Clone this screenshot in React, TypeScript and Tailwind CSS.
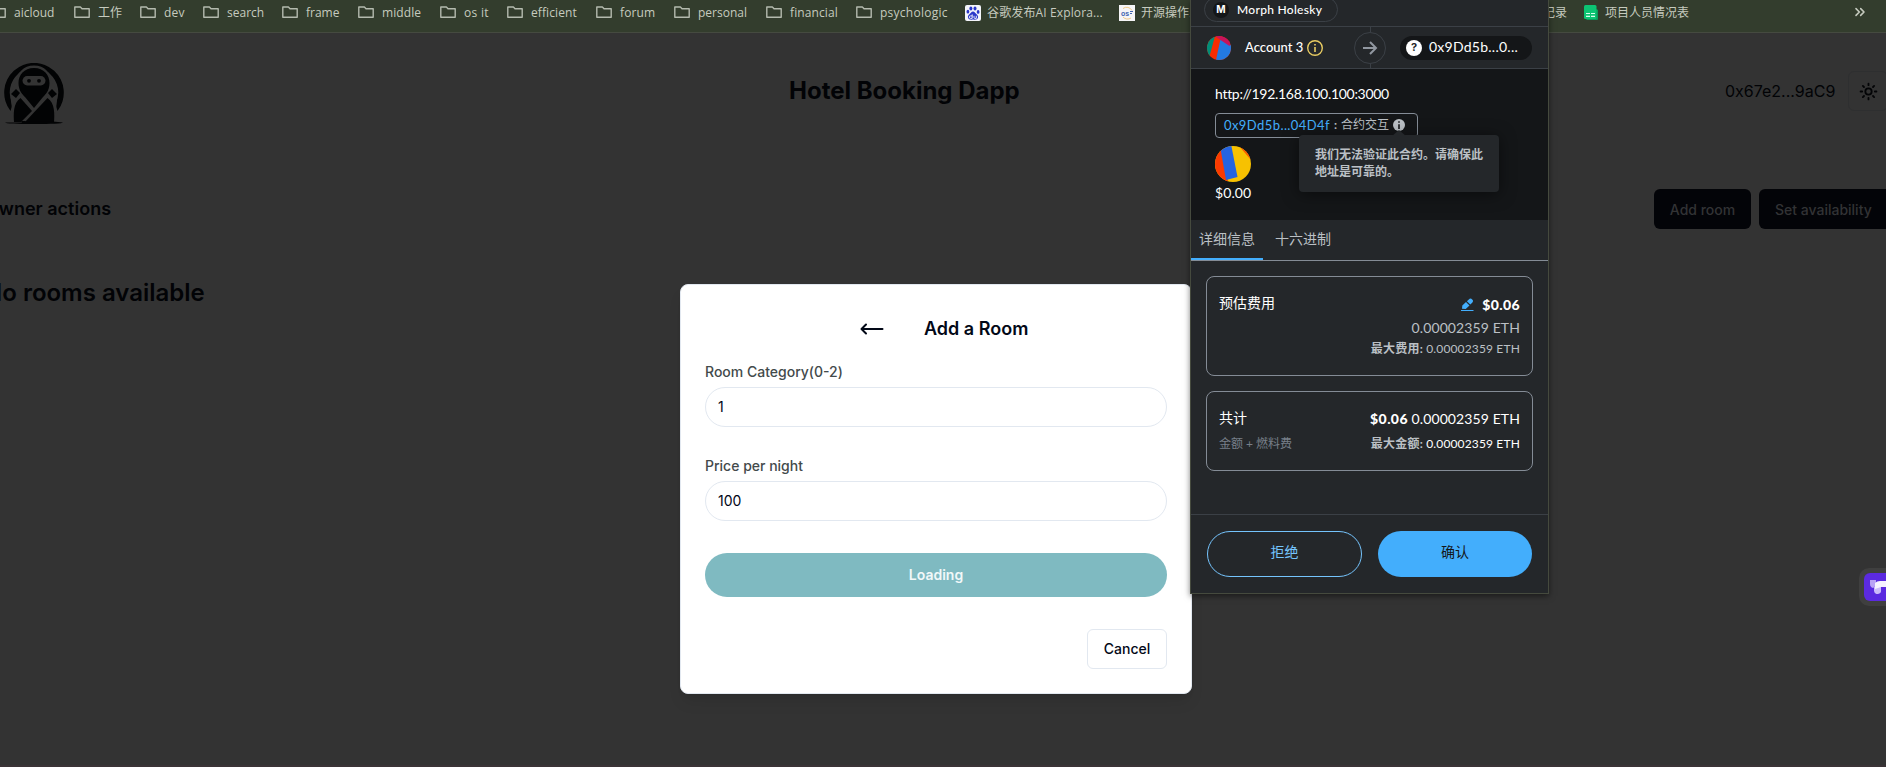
import type { ReactNode } from "react";
import { ChevronsRight } from "lucide-react";

function FolderIcon() {
  return (
    <svg width="16" height="14" viewBox="0 0 16 14" className="shrink-0" fill="none" stroke="#b4baae" strokeWidth="1.4">
      <path d="M.8 1.500v9.800h14.400V2.700H8L6.400 1H.8z" strokeLinejoin="round" />
    </svg>
  );
}

const folders = [
  { name: "aicloud", box: "w-[84px]", text: "" },
  { name: "工作", box: "w-[66px]", text: "" },
  { name: "dev", box: "w-[63px]", text: "tracking-[0.2px]" },
  { name: "search", box: "w-[79px]", text: "" },
  { name: "frame", box: "w-[76px]", text: "" },
  { name: "middle", box: "w-[82px]", text: "tracking-[0.1px]" },
  { name: "os it", box: "w-[67px]", text: "tracking-[0.3px]" },
  { name: "efficient", box: "w-[89px]", text: "tracking-[0.1px]" },
  { name: "forum", box: "w-[78px]", text: "tracking-[0.1px]" },
  { name: "personal", box: "w-[92px]", text: "" },
  { name: "financial", box: "w-[90px]", text: "tracking-[0.1px]" },
  { name: "psychologic", box: "w-[109px]", text: "tracking-[0.25px]" },
];

function BaiduIcon() {
  return (
    <svg width="16" height="16" viewBox="0 0 16 16" className="shrink-0">
      <rect width="16" height="16" rx="2" fill="#f4f5fb" />
      <g fill="#2a37c9">
        <ellipse cx="5.900" cy="3.500" rx="1.500" ry="2.100" />
        <ellipse cx="10" cy="3.500" rx="1.500" ry="2.100" />
        <ellipse cx="2.900" cy="6.700" rx="1.400" ry="1.900" />
        <ellipse cx="13.100" cy="6.900" rx="1.400" ry="1.900" />
        <path d="M8 6.600c1.600 0 2.300 1.500 3.300 2.500 1.300 1.200 2.100 2 1.700 3.700-.4 1.600-2 2-5 1.800-3 .2-4.600-.2-5-1.800-.4-1.700.4-2.500 1.700-3.700C5.700 8.100 6.400 6.600 8 6.600z" />
      </g>
      <path d="M7.200 9.400v4H5.600a1.200 1.200 0 010-2.500h1.600M9 10.800v1.700c0 .7.400.9 1 .9h1.300v-2.600" fill="none" stroke="#fff" strokeWidth=".9" />
    </svg>
  );
}

function SheetIcon() {
  return (
    <svg width="14" height="15" viewBox="0 0 14 15" className="shrink-0">
      <path d="M12.500 4l1.500 1v9a1 1 0 01-1 1H2z" fill="#0a9c5c" />
      <rect width="12.500" height="14" rx="1.500" fill="#0cc473" />
      <path d="M2 8.500h4M7 8.500h4M2 11.300h4M7 11.300h4" stroke="#d9ffed" strokeWidth="1.200" />
    </svg>
  );
}

function BookmarksBar() {
  return (
    <div className="flex h-[33px] items-start overflow-hidden whitespace-nowrap border-b border-[#454a40] bg-[#333d2d] pt-[3px] font-['Open_Sans','Noto_Sans_CJK_SC',sans-serif] text-[12px] leading-[20px] text-[#c6cbbf]">
      <div className="-ml-[10px] flex shrink-0">
        {folders.map((f) => (
          <div key={f.name} className={`flex shrink-0 items-center gap-2 ${f.box}`}>
            <FolderIcon />
            <span className={f.text}>{f.name}</span>
          </div>
        ))}
        <div className="-mt-px flex w-[154px] shrink-0 items-center gap-[6px]">
          <BaiduIcon />
          <span className="tracking-[0.130px]">谷歌发布AI Explora...</span>
        </div>
        <div className="-mt-px flex w-[424px] shrink-0 items-center gap-[6px]">
          <svg width="16" height="16" viewBox="0 0 16 16" className="shrink-0">
            <rect width="16" height="16" fill="#f5f5f7" />
            <path d="M4 3.500a6 6 0 019 2M12 13a6 6 0 01-8-1" fill="none" stroke="#f0c987" />
            <text x="2" y="10.500" fontSize="7" fontWeight="700" fill="#4263b0" fontFamily="Liberation Sans">
              os
            </text>
            <path d="M11 6.500h3M11 8.500h2" stroke="#4263b0" />
          </svg>
          <span>开源操作系统</span>
        </div>
        <div className="flex w-[41px] shrink-0 items-center">
          <span>记录</span>
        </div>
        <div className="-mt-px flex shrink-0 items-center gap-[7px]">
          <SheetIcon />
          <span>项目人员情况表</span>
        </div>
      </div>
      <ChevronsRight className="ml-auto mr-[18px] mt-[1px] shrink-0" size={16} strokeWidth={2.400} color="#c6cbbf" />
    </div>
  );
}

function NinjaLogo() {
  return (
    <svg width="60" height="62" viewBox="0 0 60 62">
      <path d="M6.500 48A29.800 29.800 0 1153.500 48L51.500 41A25 25 0 0046 11C40 3 20 3 14 11A25 25 0 008.500 41z" fill="#020304" />
      <path d="M30 2.500C19 2.500 13.500 10 13.500 18c-8 9-7 18-6 24l3 18h39l3-18c1-6 2-15-6-24C46.500 10 41 2.500 30 2.500z" fill="#333" />
      <path d="M30 5c-10 0-15.500 7-15.500 15 0 8 4.500 12 6.500 14l9 11 9-11c2-2 6.500-6 6.500-14C45.500 12 40 5 30 5z" fill="#020304" />
      <rect x="18.500" y="13" width="23" height="9.500" rx="4.700" fill="#333" />
      <circle cx="25" cy="17.800" r="1.900" fill="#020304" />
      <circle cx="35" cy="17.800" r="1.900" fill="#020304" />
      <path d="M12 26l4 4-4 5-5-4zM48 26l-4 4 4 5 5-4z" fill="#020304" />
      <path d="M16.500 35L28 48 17 59H10c-.500-8-1-19 6.500-24zM43.500 35L21 59h29c.500-8 1-19-6.500-24z" fill="#020304" />
      <path d="M1 59.500h17l-1-1.500h5l-1 .500h28l10 1c0 1-12 1.500-29 1.500S1 60.500 1 59.500z" fill="#020304" />
    </svg>
  );
}

function SunIcon() {
  return (
    <svg width="19" height="19" viewBox="0 0 24 24" fill="none" stroke="#030406" strokeWidth="2.300" strokeLinecap="round">
      <circle cx="12" cy="12" r="4" />
      <path d="M12 2v2M12 20v2M4.900 4.900l1.400 1.400M17.700 17.700l1.400 1.400M2 12h2M20 12h2M6.300 17.700l-1.400 1.400M19.100 4.900l-1.400 1.400" />
    </svg>
  );
}

function HotelPage() {
  return (
    <div className="h-[734px] overflow-hidden border-b-2 border-[#3a3336] bg-[#333333] font-['Inter',sans-serif] text-[#020306]">
      <header className="flex h-[122px] pl-[4px]">
        <div className="w-[785px] shrink-0 pt-[30px]">
          <NinjaLogo />
        </div>
        <h1 className="w-[936px] shrink-0 pt-[42px] text-[24px] font-bold leading-[32px]">Hotel Booking Dapp</h1>
        <span className="w-[123px] shrink-0 pt-[46px] text-[16px] leading-[24px]">0x67e2...9aC9</span>
        <div className="mt-[38px] flex h-10 w-10 shrink-0 items-center justify-center rounded-md border border-[#2e2f30]">
          <SunIcon />
        </div>
      </header>
      <div className="mt-[34px] flex h-10 items-center">
        <h2 className="-ml-[15px] text-[18px] font-semibold leading-[28px]">Owner actions</h2>
        <div className="ml-auto -mr-[5px] flex gap-2 text-[14px] font-medium text-[#323335]">
          <div className="flex h-10 w-[97px] items-center justify-center rounded-md bg-[#030408]">Add room</div>
          <div className="flex h-10 w-[132px] items-center rounded-md bg-[#030408] pl-4">Set availability</div>
        </div>
      </div>
      <h2 className="-ml-[16px] mt-[48px] text-[24px] font-semibold leading-[32px]">No rooms available</h2>
    </div>
  );
}

function Field({ label, value }: { label: string; value: string }) {
  return (
    <div>
      <div className="text-[14px] font-medium leading-[20px] text-[#434a4b]">{label}</div>
      <div className="mt-[5px] flex h-10 items-center rounded-full border border-slate-200 px-3 pb-px text-[14px] text-slate-950">{value}</div>
    </div>
  );
}

function AddRoomDialog() {
  return (
    <div className="absolute left-[680px] top-[284px] flex h-[410px] w-[512px] flex-col rounded-lg border border-slate-200 bg-white px-6 font-['Inter',sans-serif] shadow-lg">
      <div className="mt-[30px] flex h-[28px] items-center">
        <svg width="24" height="14" viewBox="0 0 24 14" className="ml-[155px]" fill="none" stroke="#020817" strokeWidth="2" strokeLinecap="round" strokeLinejoin="round">
          <path d="M6 2.500L1.500 7 6 11.500M2 7h20.500" />
        </svg>
        <h3 className="ml-[40px] text-[18px] font-semibold leading-[28px] text-[#020817]">Add a Room</h3>
      </div>
      <div className="mt-[19px] flex flex-col gap-[29px]">
        <Field label="Room Category(0-2)" value="1" />
        <Field label="Price per night" value="100" />
      </div>
      <div className="mt-[32px] flex h-11 items-center justify-center rounded-full bg-[#7fbac1] pb-[2px] text-[14px] font-semibold text-[#f1f8f9]">Loading</div>
      <div className="mt-[32px] flex h-10 w-[80px] items-center justify-center self-end rounded-md border border-slate-200 pb-[2px] text-[14px] font-medium text-[#020817]">Cancel</div>
    </div>
  );
}

function AccountAvatar() {
  return (
    <svg width="24" height="24" viewBox="0 0 24 24">
      <clipPath id="account">
        <circle cx="12" cy="12" r="12" />
      </clipPath>
      <g clipPath="url(#account)">
        <rect width="24" height="24" fill="#f92c01" />
        <path d="M0 0h8L2 22H0z" fill="#018e78" />
        <path d="M13.500 3L24 9v15H9z" fill="#2379e1" />
        <path d="M13 0h11v7l-1.500 3L13.500 4 8 0z" fill="#c8145c" />
      </g>
    </svg>
  );
}

function ContractAvatar() {
  return (
    <svg width="36" height="36" viewBox="0 0 36 36">
      <clipPath id="contract">
        <circle cx="18" cy="18" r="18" />
      </clipPath>
      <g clipPath="url(#contract)">
        <rect width="36" height="36" fill="#f7c101" />
        <path d="M0 0h7l6 36H0z" fill="#fb3a01" />
        <path d="M5 0l11-2 6.500 33L11 34z" fill="#2464e1" />
        <path d="M24 0l12 14V0z" fill="#fb5a01" />
      </g>
    </svg>
  );
}

function Row({ className, children }: { className: string; children: ReactNode }) {
  return <div className={`flex items-center justify-between whitespace-pre ${className}`}>{children}</div>;
}

function WalletPopup() {
  return (
    <div className="absolute left-[1190px] top-0 flex h-[594px] w-[359px] flex-col border border-t-0 border-[#454a3e] bg-[#24272a] font-['Lato','Noto_Sans_CJK_SC',sans-serif] text-white shadow-[0_2px_6px_rgba(0,0,0,0.5)]">
      <div className="flex h-[27px] shrink-0 border-b border-[#3b4046] pl-[13px]">
        <div className="-mt-[3px] flex h-[25px] w-[134px] items-center gap-2 rounded-full border border-[#3b4046] pl-[8px]">
          <div className="flex h-4 w-4 items-center justify-center rounded-full bg-[#141618] font-['Inter',sans-serif] text-[10px] font-bold">M</div>
          <span className="whitespace-nowrap text-[12px] font-medium tracking-[0.300px]">Morph Holesky</span>
        </div>
      </div>
      <div className="flex h-[42px] shrink-0 items-center border-b border-[#3b4046] pl-[16px]">
        <AccountAvatar />
        <span className="-mt-[2px] ml-[14px] w-[61px] whitespace-nowrap text-[13px] font-medium leading-[16px]">Account 3</span>
        <svg width="18" height="18" viewBox="0 0 18 18" className="mt-px" fill="none" stroke="#e9cc62">
          <circle cx="9" cy="9" r="7.300" strokeWidth="1.400" />
          <path d="M9 8v5M9 5v1.600" strokeWidth="1.600" />
        </svg>
        <div className="ml-[30px] flex h-[41px] w-8 flex-col items-center">
          <div className="h-[5px] w-px bg-[#3b4046]" />
          <div className="flex h-8 w-8 items-center justify-center rounded-full border border-[#3b4046]">
            <svg width="16" height="16" viewBox="0 0 16 16" fill="none" stroke="#9197a0" strokeWidth="2">
              <path d="M1 8h12.500M8 2l6 6-6 6" />
            </svg>
          </div>
          <div className="h-1 w-px bg-[#3b4046]" />
        </div>
        <div className="ml-[14px] flex h-6 w-[132px] items-center rounded-full bg-[#141618] pl-[6px]">
          <div className="flex h-4 w-4 items-center justify-center rounded-full bg-white font-['Inter',sans-serif] text-[11px] font-bold text-[#24272a]">?</div>
          <span className="ml-[7px] whitespace-nowrap pb-px text-[14px] leading-[18px] tracking-[0.250px]">0x9Dd5b...0...</span>
        </div>
      </div>
      <div className="h-[151px] shrink-0 bg-[#141618] pl-[24px] pt-[15px]">
        <div className="text-[14px] leading-[20px] tracking-[-0.300px]">http://192.168.100.100:3000</div>
        <div className="mt-[9px] flex h-[25px] w-[203px] items-center whitespace-pre rounded border border-[#848c96] pb-[2px] pl-[8px] text-[12px] leading-[16px] text-[#bbc0c5]">
          <span className="w-[110px] text-[13px] tracking-[0.420px] text-[#43aefc]">0x9Dd5b...04D4f</span>
          <span className="w-[7px] font-bold">:</span>
          <span>合约交互</span>
          <svg width="12" height="12" viewBox="0 0 12 12" className="ml-[4px]">
            <circle cx="6" cy="6" r="6" fill="#bbc0c5" />
            <path d="M6 5.200V10M6 2.200v1.600" stroke="#141618" strokeWidth="1.600" />
          </svg>
        </div>
        <div className="mt-[8px]">
          <ContractAvatar />
        </div>
        <div className="mt-[1px] text-[14px] leading-[20px] tracking-[0.100px]">$0.00</div>
      </div>
      <div className="flex h-[41px] shrink-0 border-b border-[#848c96] text-[14px] leading-[20px] text-[#bbc0c5]">
        <div className="h-[40px] w-[72px] border-b-2 border-[#43aefc] pl-[8px] pt-[9px]">详细信息</div>
        <div className="pl-[12px] pt-[9px]">十六进制</div>
      </div>
      <div className="mx-[15px] mt-[15px] h-[100px] w-[327px] shrink-0 rounded-lg border border-[#848c96] px-[12px] pt-[15px]">
        <Row className="h-[22px] text-[14px] leading-[20px]">
          <span>预估费用</span>
          <span className="flex items-center pt-[4px]">
            <svg width="13" height="14" viewBox="0 0 13 14" className="mr-[8px]" fill="#43aefc">
              <path d="M1 10.800l.3-3.300L5 4l3.500 3.500-3.800 3.400zM5.900 3.200l1.900-1.800a2.400 2.400 0 013.400 3.400L9.300 6.600z" />
              <rect y="12" width="12.500" height="1" />
            </svg>
            <b className="font-black tracking-[0.400px]">$0.06</b>
          </span>
        </Row>
        <div className="mt-[4px] text-right text-[14px] leading-[20px] tracking-[0.100px] text-[#bbc0c5]">0.00002359 ETH</div>
        <div className="mt-[2px] text-right text-[12px] leading-[18px] tracking-[0.150px] text-[#bbc0c5]">
          <b className="font-bold tracking-[0.200px]">最大费用:</b> 0.00002359 ETH
        </div>
      </div>
      <div className="mx-[15px] mt-[15px] h-[80px] w-[327px] shrink-0 rounded-lg border border-[#848c96] px-[12px] pt-[16px]">
        <Row className="h-[22px] text-[14px] leading-[20px]">
          <span className="-mt-[2px]">共计</span>
          <span className="tracking-[0.100px]">
            <b className="font-black tracking-[0.400px]">$0.06</b> 0.00002359 ETH
          </span>
        </Row>
        <Row className="mt-[4px] h-[20px] text-[12px] leading-[18px]">
          <span className="text-[#777f89]">金额 + 燃料费</span>
          <span className="tracking-[0.150px]">
            <b className="font-bold tracking-[0.200px] text-[#bbc0c5]">最大金额:</b> 0.00002359 ETH
          </span>
        </Row>
      </div>
      <div className="mt-auto flex h-[79px] shrink-0 gap-4 border-t border-[#3b4046] px-4 pt-4 text-[14px] leading-[20px]">
        <div className="flex h-[46px] w-[155px] items-center justify-center rounded-full border border-[#75c4fd] pb-[5px] text-[#75c4fd]">拒绝</div>
        <div className="flex h-[46px] w-[154px] items-center justify-center rounded-full bg-[#43aefc] pb-[5px] text-[#141618]">确认</div>
      </div>
      <div className="absolute left-[108px] top-[135px] h-[57px] w-[200px] rounded bg-[#24272a] pl-[16px] pt-[11px] text-[12px] font-bold leading-[17px] text-[#bbc0c5] shadow-[0_2px_16px_rgba(0,0,0,0.5)]">
        <svg width="14" height="6" viewBox="0 0 14 6" className="absolute -top-[5px] left-[93px]">
          <path d="M0 6l7-6 7 6z" fill="#24272a" />
        </svg>
        我们无法验证此合约。请确保此
        <br />
        地址是可靠的。
      </div>
    </div>
  );
}

function SideWidget() {
  return (
    <div className="absolute right-0 top-[568px] h-[38px] w-[27px] rounded-l-[10px] bg-[#3f3f3f] py-[5px] pl-[5px]">
      <div className="flex h-[28px] items-center overflow-hidden rounded-l-[6px] bg-[#5b2ae0] pl-[6px]">
        <svg width="16" height="14" viewBox="0 0 16 14" className="shrink-0">
          <path d="M0 0h6v6L3 8Q0 7 0 4z" fill="#b9a2f5" />
          <path d="M4 7h7v3a3.500 3.500 0 01-7 1z" fill="#cbbcf8" />
          <path d="M5 3Q7 1 10 1h6v6h-5L5 9z" fill="#f6f2ff" />
        </svg>
      </div>
    </div>
  );
}

export default function App() {
  return (
    <div className="relative h-[767px] w-full overflow-hidden bg-[#333333]">
      <BookmarksBar />
      <HotelPage />
      <AddRoomDialog />
      <WalletPopup />
      <SideWidget />
    </div>
  );
}
